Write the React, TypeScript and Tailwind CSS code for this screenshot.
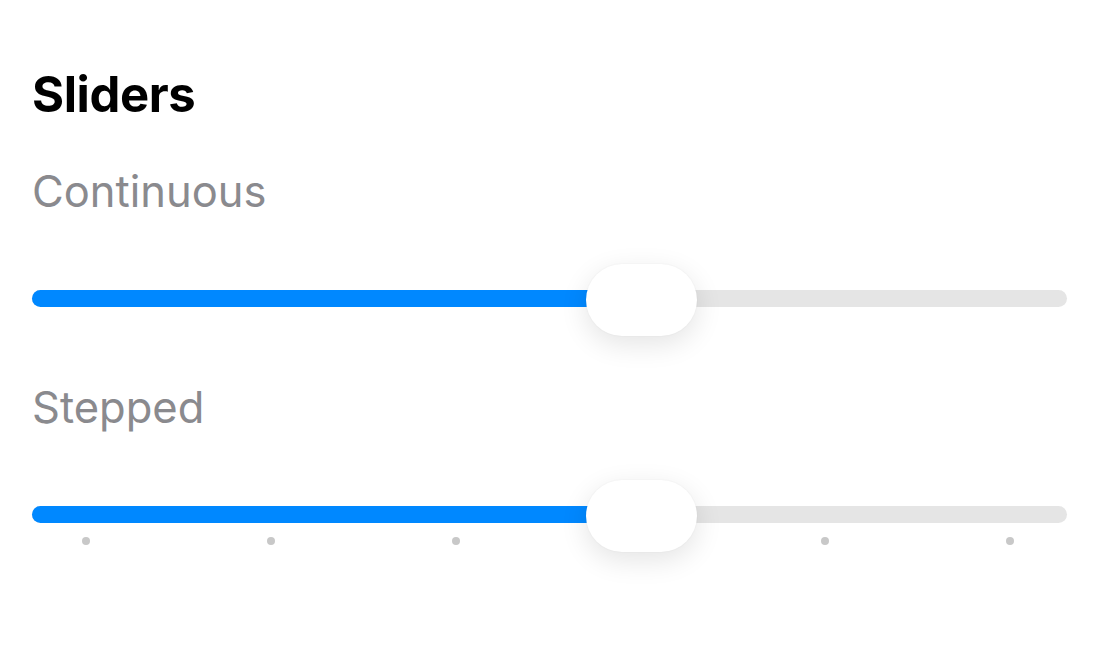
import React, { useState } from 'react';

interface SliderProps {
  value: number; // 0..1
  steps?: number; // number of intervals, ticks drawn when set
}

const THUMB_W = 111;

const Slider: React.FC<SliderProps> = ({ value, steps }) => {
  const ticks = steps ? Array.from({ length: steps + 1 }, (_, i) => i) : [];
  const fill = `calc(${THUMB_W / 2}px + (100% - ${THUMB_W}px) * ${value})`;

  return (
    <div className="relative flex flex-col pt-[26px] min-h-[72px]">
      {/* Track */}
      <div className="h-[17px] rounded-full bg-[#e5e5e5]">
        <div className="h-full rounded-full bg-[#0088ff]" style={{ width: fill }} />
      </div>

      {/* Tick marks */}
      {ticks.length > 0 && (
        <div className="flex justify-between pl-[50px] pr-[53px] mt-[14px]">
          {ticks.map((t) => (
            <span key={t} className="w-[8px] h-[8px] rounded-full bg-[#c8c8c8]" />
          ))}
        </div>
      )}

      {/* Thumb */}
      <div
        className="absolute top-0 h-[72px] w-[111px] rounded-[36px] bg-white shadow-[0_8px_28px_rgba(0,0,0,0.11),0_0_2px_rgba(0,0,0,0.06)]"
        style={{ left: `calc((100% - ${THUMB_W}px) * ${value})` }}
      />
    </div>
  );
};

export default function App() {
  const [continuous] = useState(0.6);
  const [stepped] = useState(3);

  return (
    <div
      className="w-[1100px] h-[660px] bg-white pl-[32px] pr-[33px] pt-[65px] flex flex-col"
      style={{ fontFamily: 'Inter, "Noto Sans", sans-serif' }}
    >
      <h1 className="text-[49px] leading-[59px] font-bold text-black tracking-[-0.4px]">Sliders</h1>

      <div className="mt-[41px] text-[43.5px] leading-[52px] text-[#8a8a8e]">Continuous</div>
      <div className="mt-[47px]">
        <Slider value={continuous} />
      </div>

      <div className="mt-[45px] text-[43.5px] leading-[52px] text-[#8a8a8e]">Stepped</div>
      <div className="mt-[47px]">
        <Slider value={stepped / 5} steps={5} />
      </div>
    </div>
  );
}
